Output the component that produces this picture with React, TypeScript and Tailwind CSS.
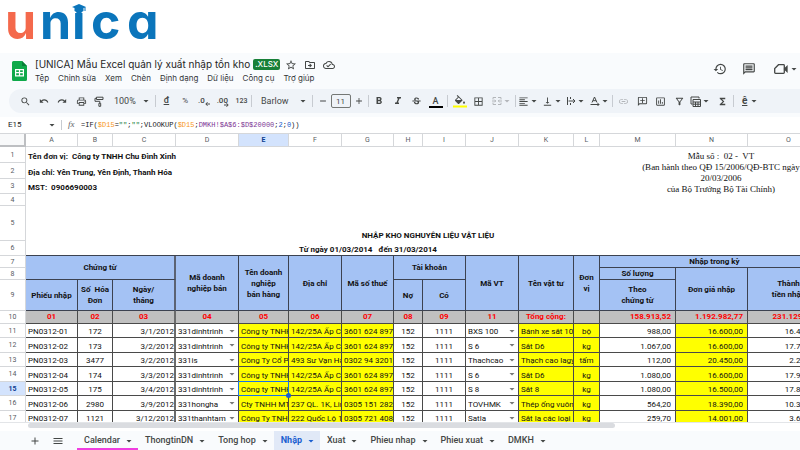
import type { ReactNode } from 'react';
import clsx from 'clsx';
import {
  MdAdd,
  MdArrowDropDown,
  MdBorderAll,
  MdFormatAlignLeft,
  MdFormatBold,
  MdFormatItalic,
  MdFunctions,
  MdHistory,
  MdInsertChartOutlined,
  MdLink,
  MdMenu,
  MdOutlineAddComment,
  MdOutlineCloudDone,
  MdOutlineComment,
  MdOutlineDriveFileMove,
  MdOutlineFilterAlt,
  MdOutlinePrint,
  MdRedo,
  MdRemove,
  MdSearch,
  MdStarBorder,
  MdStrikethroughS,
  MdUndo,
  MdVerticalAlignBottom,
} from 'react-icons/md';

const MENUS = ['Tệp', 'Chỉnh sửa', 'Xem', 'Chèn', 'Định dạng', 'Dữ liệu', 'Công cụ', 'Trợ giúp'];

const COLUMNS = [
  { name: 'A', width: 52 },
  { name: 'B', width: 35 },
  { name: 'C', width: 63 },
  { name: 'D', width: 63 },
  { name: 'E', width: 50 },
  { name: 'F', width: 53 },
  { name: 'G', width: 52 },
  { name: 'H', width: 29 },
  { name: 'I', width: 43 },
  { name: 'J', width: 53 },
  { name: 'K', width: 55 },
  { name: 'L', width: 26 },
  { name: 'M', width: 76 },
  { name: 'N', width: 72 },
  { name: 'O', width: 82 },
];

const ROWS = [
  ['PN0312-01', '172', '3/1/2012', '331dinhtrinh', 'Công ty TNHH', '142/25A Ấp Cá', '3601 624 897', '152', '1111', 'BXS 100', 'Bánh xe sắt 10', 'bộ', '988,00', '16.600,00', '16.400.800'],
  ['PN0312-02', '173', '3/2/2012', '331dinhtrinh', 'Công ty TNHH', '142/25A Ấp Cá', '3601 624 897', '152', '1111', 'S 6', 'Sắt D6', 'kg', '1.067,00', '16.600,00', '17.712.200'],
  ['PN0312-03', '3477', '3/2/2012', '331is', 'Công Ty Cổ P', '493 Sư Vạn Hạ', '0302 94 3201', '152', '1111', 'Thachcao', 'Thạch cao lagy', 'tấm', '112,00', '20.450,00', '2.290.400'],
  ['PN0312-04', '174', '3/3/2012', '331dinhtrinh', 'Công ty TNHH', '142/25A Ấp Cá', '3601 624 897', '152', '1111', 'S 6', 'Sắt D6', 'kg', '1.080,00', '16.600,00', '17.928.000'],
  ['PN0312-05', '175', '3/4/2012', '331dinhtrinh', 'Công ty TNHH', '142/25A Ấp Cá', '3601 624 897', '152', '1111', 'S 8', 'Sắt 8', 'kg', '1.080,00', '16.500,00', '17.820.000'],
  ['PN0312-06', '2980', '3/9/2012', '331hongha', 'Cty TNHH MT', '237 QL. 1K, Lin', '0305 151 282', '152', '1111', 'TOVHMK', 'Thép ống vuôn', 'kg', '564,20', '18.390,00', '10.375.638'],
  ['PN0312-07', '1121', '3/12/2012', '331thanhtam', 'Công Ty TNH', '222 Quốc Lộ 1', '0305 721 408', '152', '1111', 'Satla', 'Sắt la các loại', 'kg', '259,70', '14.001,00', '3.636.060'],
];

const TOTALS = ['01', '02', '03', '04', '05', '06', '07', '08', '09', '11', 'Tổng cộng:', '', '158.913,52', '1.192.982,77', '231.129.512,5'];

const SHEETS = ['Calendar', 'ThongtinDN', 'Tong hop', 'Nhập', 'Xuat', 'Phieu nhap', 'Phieu xuat', 'DMKH'];

const CENTERED = [1, 7, 8, 11];
const RIGHT = [2, 12, 13, 14];
const YELLOW = [4, 5, 6, 10, 11, 13];
const DROPDOWN = [3, 9];

function Logo() {
  return (
    <div
      aria-label="unica"
      className="flex h-[53px] shrink-0 items-start pl-[5px] font-['Inter',sans-serif] text-[50px] font-bold leading-[42px] text-[#0b75bb] [font-feature-settings:'cv11']"
    >
      <span className="w-[35px] text-[#f4694c]">u</span>
      <span className="w-8">n</span>
      <span className="relative w-[19px]">
        i
        <svg viewBox="0 0 14 13" className="absolute left-0 top-0 h-[13px] w-[14px]">
          <path d="M0 0h14v13H0z" fill="#fff" />
          <path d="M7 4 0 7l2.500 1.100V11c1.500 1 2 .8 2 2h5c0-1.200.500-1 2-2V8.100l1-.4V11h1V7.200L14 7z" fill="#0b75bb" />
        </svg>
      </span>
      <span className="w-9">c</span>
      <span>a</span>
    </div>
  );
}

function SheetsIcon() {
  return (
    <svg viewBox="0 0 15 20" className="h-5 w-[15px] shrink-0">
      <path d="M1.500 0H10l5 5v13.500a1.500 1.500 0 0 1-1.500 1.500h-12A1.500 1.500 0 0 1 0 18.500v-17A1.500 1.500 0 0 1 1.500 0z" fill="#0fa94a" />
      <path d="M10 0l5 5h-5z" fill="#087f38" />
      <path d="M3 8h9v7.500H3zM4.200 9.200v1.900h2.700V9.200zm3.900 0v1.900h2.700V9.200zm-3.900 3.100v2h2.700v-2zm3.900 0v2h2.700v-2z" fill="#fff" fillRule="evenodd" />
    </svg>
  );
}

function Caret({ className }: { className?: string }) {
  return <MdArrowDropDown className={clsx('h-3 w-3 shrink-0', className)} />;
}

function Separator() {
  return <div className="h-3 w-px shrink-0 bg-[#c7cbd1]" />;
}

interface ToolProps {
  label: string;
  children: ReactNode;
  menu?: boolean;
  muted?: boolean;
}

function Tool({ label, children, menu, muted }: ToolProps) {
  return (
    <button
      type="button"
      aria-label={label}
      className={clsx('flex items-center justify-center', muted && 'text-[#b3b6ba]')}
    >
      {children}
      {menu && <Caret className="-mx-px" />}
    </button>
  );
}

function Header() {
  return (
    <header className="flex h-9 shrink-0 items-start bg-[#f9fbfd] pl-3">
      <div className="pt-2">
        <SheetsIcon />
      </div>
      <div className="flex flex-col pl-2 pt-1 font-['Inter',sans-serif]">
        <div className="flex items-center whitespace-nowrap leading-[15px] text-[#1f1f1f]">
          <h1 className="text-[10px]">[UNICA] Mẫu Excel quản lý xuất nhập tồn kho</h1>
          <span className="ml-[3px] rounded-[2px] bg-[#188038] px-[2px] text-[8px] font-medium leading-[11px] text-white">.XLSX</span>
          <div className="ml-[5px] flex gap-[7px] text-[#444746]">
            <button type="button" aria-label="Gắn dấu sao"><MdStarBorder className="h-3 w-3" /></button>
            <button type="button" aria-label="Di chuyển"><MdOutlineDriveFileMove className="h-3 w-3" /></button>
            <button type="button" aria-label="Trạng thái"><MdOutlineCloudDone className="h-3 w-3" /></button>
          </div>
        </div>
        <nav className="flex gap-[9px] whitespace-nowrap text-[8px] leading-[12px] text-[#333639]">
          {MENUS.map((menu) => (
            <button key={menu} type="button">{menu}</button>
          ))}
        </nav>
      </div>
      <div className="ml-auto flex items-center gap-[15px] pt-[9px] text-[#444746]">
        <button type="button" aria-label="Lịch sử"><MdHistory className="h-[14px] w-[14px]" /></button>
        <button type="button" aria-label="Nhận xét"><MdOutlineComment className="h-[14px] w-[14px] -scale-x-100" /></button>
        <button type="button" aria-label="Cuộc gọi" className="ml-[3px] flex items-center">
          <svg viewBox="0 0 14 14" className="h-[14px] w-[14px]" fill="none" stroke="currentColor" strokeWidth="1.300">
            <path d="M4.500 2.700h5a.8.800 0 0 1 .8.800v7a.8.800 0 0 1-.8.800h-8a.8.800 0 0 1-.8-.8v-4z" />
            <path d="M10.500 7 13 4.500v5z" fill="currentColor" />
          </svg>
          <Caret />
        </button>
      </div>
    </header>
  );
}

function Toolbar() {
  return (
    <div className="shrink-0 bg-[#f9fbfd] pb-1 pl-[9px]">
      <div className="flex h-6 items-center overflow-hidden rounded-l-full bg-[#eff3f8] pl-[7px] text-[8px] text-[#444746] [&_svg]:shrink-0">
        <div className="grid w-[93px] shrink-0 grid-cols-5">
          <Tool label="Tìm"><MdSearch className="h-[11px] w-[11px]" /></Tool>
          <Tool label="Hoàn tác"><MdUndo className="h-[10px] w-[10px]" /></Tool>
          <Tool label="Làm lại"><MdRedo className="h-[10px] w-[10px]" /></Tool>
          <Tool label="In"><MdOutlinePrint className="h-[11px] w-[11px]" /></Tool>
          <Tool label="Sao chép định dạng">
            <svg viewBox="0 0 11 11" className="h-[11px] w-[11px]" fill="none" stroke="currentColor">
              <path d="M2.500 1.200h6.500v2.300H2.500zM2.500 2.300H1v3h4.800v2M4.900 7.300h1.800v3H4.900z" />
            </svg>
          </Tool>
        </div>
        <div className="relative flex w-[46px] shrink-0 items-center">
          <select aria-label="Thu phóng" className="w-full appearance-none bg-transparent pl-[5px] text-[9px] leading-3">
            <option>100%</option>
          </select>
          <Caret className="pointer-events-none absolute right-[3px]" />
        </div>
        <Separator />
        <div className="ml-px grid w-[94px] shrink-0 grid-cols-5">
          <Tool label="Tiền tệ"><span className="text-[9px] font-medium underline">đ</span></Tool>
          <Tool label="Phần trăm">%</Tool>
          <Tool label="Giảm số thập phân">
            <span className="font-medium leading-[10px]">.0</span>
            <svg viewBox="0 0 5 6" className="mt-[6px] h-[6px] w-[5px]" fill="none" stroke="currentColor"><path d="M5 3H1M2.500 1.200.800 3l1.700 1.800" /></svg>
          </Tool>
          <Tool label="Tăng số thập phân">
            <span className="font-medium leading-[10px]">.00</span>
            <svg viewBox="0 0 5 6" className="-ml-1 mt-[8px] h-[6px] w-[5px]" fill="none" stroke="currentColor"><path d="M0 3h4M2.500 1.200 4.200 3 2.500 4.800" /></svg>
          </Tool>
          <Tool label="Định dạng số"><span className="text-[7px] font-medium">123</span></Tool>
        </div>
        <Separator />
        <div className="relative flex w-[60px] shrink-0 items-center">
          <select aria-label="Phông chữ" className="w-full appearance-none bg-transparent pl-[9px] text-[9px] leading-3">
            <option>Barlow</option>
          </select>
          <Caret className="pointer-events-none absolute right-[3px]" />
        </div>
        <Separator />
        <div className="flex w-[55px] shrink-0 items-center justify-center gap-[3px]">
          <button type="button" aria-label="Giảm cỡ chữ"><MdRemove className="h-[10px] w-[10px]" /></button>
          <input aria-label="Cỡ chữ" defaultValue="11" className="h-[14px] w-5 rounded-[2px] border border-[#747775] bg-transparent text-center text-[8px]" />
          <button type="button" aria-label="Tăng cỡ chữ"><MdAdd className="h-[10px] w-[10px]" /></button>
        </div>
        <Separator />
        <div className="mr-[2px] grid w-[76px] shrink-0 grid-cols-4">
          <Tool label="Đậm"><MdFormatBold className="h-3 w-3" /></Tool>
          <Tool label="Nghiêng"><MdFormatItalic className="h-3 w-3" /></Tool>
          <Tool label="Gạch ngang"><MdStrikethroughS className="h-[11px] w-[11px]" /></Tool>
          <Tool label="Màu chữ">
            <span className="w-[14px] border-b-2 border-black pt-px text-[9px] font-medium leading-[10px]">A</span>
          </Tool>
        </div>
        <Separator />
        <div className="ml-[2px] flex shrink-0 items-center">
          <div className="grid w-[38px] grid-cols-2">
            <Tool label="Màu nền">
              <svg viewBox="0 0 14 13" className="h-[13px] w-[14px]" fill="currentColor">
                <path d="M4.500 0 9.700 5.200 6.200 8.700a1 1 0 0 1-1.300 0L2.200 6a1 1 0 0 1 0-1.300L5 1.900 3.700.700zM5.700 2.600 3.200 5.100h5zM11 6s1 1.200 1 1.800a1 1 0 0 1-2 0C10 7.200 11 6 11 6z" />
                <path d="M0 10.500h14v2H0z" fill="#ffff00" />
              </svg>
            </Tool>
            <Tool label="Đường viền"><MdBorderAll className="h-[11px] w-[11px]" /></Tool>
          </div>
          <div className="flex w-[27px] justify-center">
            <Tool label="Hợp nhất ô" menu muted>
              <svg viewBox="0 0 10 10" className="h-[10px] w-[10px]" fill="none" stroke="currentColor">
                <path d="M4 1.500H1V3.500M6 1.500h3v2M4 8.500H1V6.500M6 8.500h3v-2M0 5h3.500M2.500 3.700 3.800 5 2.500 6.300M10 5H6.500M7.500 3.700 6.200 5l1.300 1.300" />
              </svg>
            </Tool>
          </div>
        </div>
        <Separator />
        <div className="grid w-[96px] shrink-0 grid-cols-4">
          <Tool label="Căn ngang" menu><MdFormatAlignLeft className="h-[11px] w-[11px]" /></Tool>
          <Tool label="Căn dọc" menu><MdVerticalAlignBottom className="h-[11px] w-[11px]" /></Tool>
          <Tool label="Xuống dòng" menu>
            <svg viewBox="0 0 10 10" className="h-[10px] w-[10px]" fill="none" stroke="currentColor">
              <path d="M1.500 1v8M4.500 1v2M4.500 7v2M2.500 5h6.500M7 3l2 2-2 2" />
            </svg>
          </Tool>
          <Tool label="Xoay chữ" menu>
            <svg viewBox="0 0 10 10" className="h-[10px] w-[10px]" fill="none" stroke="currentColor">
              <path d="M2 6.500 4.500 1 7 6.500M3 4.700h3M.500 8.500H9M7.500 7 9 8.500 7.500 10" />
            </svg>
          </Tool>
        </div>
        <Separator />
        <div className="flex shrink-0 items-center pl-px">
          <div className="grid w-[75px] grid-cols-4">
            <Tool label="Liên kết" muted><MdLink className="h-[11px] w-[11px]" /></Tool>
            <Tool label="Nhận xét"><MdOutlineAddComment className="h-[11px] w-[11px] -scale-x-100" /></Tool>
            <Tool label="Biểu đồ"><MdInsertChartOutlined className="h-[11px] w-[11px]" /></Tool>
            <Tool label="Bộ lọc"><MdOutlineFilterAlt className="h-[11px] w-[11px]" /></Tool>
          </div>
          <div className="flex w-[22px] justify-center">
            <Tool label="Chế độ xem" menu>
              <svg viewBox="0 0 11 11" className="h-[11px] w-[11px]" fill="none" stroke="currentColor">
                <path d="M9 2.500V1H1v7h1.500M3 3.500h7.500v7H3zM3 6h7.500M3 8.200h7.500M5.500 6v4.500M8 6v4.500" />
              </svg>
            </Tool>
          </div>
          <div className="flex w-[22px] justify-center">
            <Tool label="Hàm"><MdFunctions className="h-[11px] w-[11px]" /></Tool>
          </div>
        </div>
        <Separator />
        <div className="ml-2">
          <Tool label="Công cụ nhập" menu>
            <span className="mr-[2px] text-[10px] font-bold leading-[10px] underline">ê</span>
          </Tool>
        </div>
      </div>
    </div>
  );
}

function FormulaBar() {
  return (
    <div className="flex h-[17px] shrink-0 items-center border-b border-[#d5d7da] bg-white text-[8px] text-[#202124]">
      <input aria-label="Hộp tên" defaultValue="E15" className="w-[46px] pl-2" />
      <Caret className="text-[#444746]" />
      <div className="ml-[3px] h-[10px] w-px bg-[#c7cbd1]" />
      <i className="w-[19px] pl-[6px] font-['Liberation_Serif',serif] text-[9px] text-[#5f6368]">fx</i>
      <code className="whitespace-nowrap font-['Liberation_Mono',monospace] text-[7px]">
        =IF(<span className="text-[#f7981d]">$D15</span>=<span className="text-[#188038]">""</span>;
        <span className="text-[#188038]">""</span>;VLOOKUP(<span className="text-[#f7981d]">$D15</span>;
        <span className="text-[#7e3794]">DMKH!$A$6:$D$20000</span>;<span className="text-[#1155cc]">2</span>;
        <span className="text-[#1155cc]">0</span>))
      </code>
    </div>
  );
}

function RowHead({ row, active }: { row: number; active?: boolean }) {
  return (
    <th
      scope="row"
      className={clsx(
        'border-b border-r border-[#d5d7da] text-[7px] leading-[10px]',
        active ? 'bg-[#d3e3fd] font-bold text-[#0b3d91]' : 'bg-white font-normal text-[#575b5f]',
      )}
    >
      {row}
    </th>
  );
}

interface HeadCellProps {
  children?: ReactNode;
  colSpan?: number;
  rowSpan?: number;
  frozen?: boolean;
}

function HeadCell({ children, colSpan, rowSpan, frozen }: HeadCellProps) {
  return (
    <th
      colSpan={colSpan}
      rowSpan={rowSpan}
      className={clsx(
        'border-b border-[#3c4250] bg-[#a4c2f4] text-center font-bold leading-[11px]',
        frozen ? 'border-r-2 border-r-[#5b6273]' : 'border-r',
      )}
    >
      {children}
    </th>
  );
}

function DataRow({ cells, row }: { cells: string[]; row: number }) {
  const active = row === 15;
  return (
    <tr className={row % 2 ? 'h-[14px]' : 'h-[15px]'}>
      <RowHead row={row} active={active} />
      {cells.map((cell, i) => (
        <td
          key={i}
          className={clsx(
            'relative border-b border-[#4a4a4a]',
            i === 2 ? 'border-r-2 border-r-[#6b6b6b]' : 'border-r',
            YELLOW.includes(i) ? 'bg-[#ffff00]' : 'bg-white',
            CENTERED.includes(i) && 'text-center',
            RIGHT.includes(i) && (i < 12 ? 'text-right' : 'pr-1 text-right'),
            !CENTERED.includes(i) && !RIGHT.includes(i) && 'pl-[2px]',
          )}
        >
          {DROPDOWN.includes(i) ? (
            <div className="relative flex items-center">
              <select aria-label={`${COLUMNS[i].name}${row}`} className="h-[13px] w-full appearance-none bg-transparent pt-[2px] leading-[11px]">
                <option>{cell}</option>
              </select>
              <Caret className="pointer-events-none absolute right-0 text-[#777]" />
            </div>
          ) : (
            <div className="h-[13px] overflow-hidden leading-[15px]">{cell}</div>
          )}
          {active && i === 4 && (
            <div className="absolute -left-px -top-px bottom-[-1px] right-[-1px] z-10 border border-[#1a73e8]">
              <div className="absolute -bottom-[3px] -right-[3px] h-[5px] w-[5px] rounded-full bg-[#1a5fd0]" />
            </div>
          )}
        </td>
      ))}
    </tr>
  );
}

function Grid() {
  return (
    <div className="min-h-0 flex-1 overflow-hidden">
      <table className="w-[830px] table-fixed border-separate border-spacing-0 whitespace-nowrap text-[8px] text-[#111]">
        <colgroup>
          <col className="w-[26px]" />
          {COLUMNS.map((col) => (
            <col key={col.name} style={{ width: col.width }} />
          ))}
        </colgroup>
        <thead>
          <tr className="h-[13px] text-[7px] leading-[10px] text-[#575b5f]">
            <td className="border-b-2 border-r-2 border-[#bdbfc2] bg-[#f8f9fa]" />
            {COLUMNS.map((col) => (
              <th
                key={col.name}
                scope="col"
                className={clsx(
                  'border-b border-r border-[#d5d7da]',
                  col.name === 'E' ? 'bg-[#d3e3fd] font-bold text-[#0b3d91]' : 'font-normal',
                )}
              >
                {col.name}
              </th>
            ))}
          </tr>
        </thead>
        <tbody>
          <tr className="h-4">
            <RowHead row={1} />
            <td colSpan={12} className="pl-[2px] pt-1 font-bold leading-3">Tên đơn vị:&nbsp; Công ty TNHH Chu Đình Xinh</td>
            <td colSpan={3} rowSpan={4} className="pl-3 pt-1 text-center align-top font-['Liberation_Serif',serif] text-[9px] leading-[11px]">
              Mẫu số :&nbsp; 02 -&nbsp; VT
              <br />
              (Ban hành theo QĐ 15/2006/QĐ-BTC ngày
              <br />
              20/03/2006
              <br />
              của Bộ Trưởng Bộ Tài Chính)
            </td>
          </tr>
          <tr className="h-4">
            <RowHead row={2} />
            <td colSpan={12} className="pl-[2px] pt-1 font-bold leading-3">Địa chỉ: Yên Trung, Yên Định, Thanh Hóa</td>
          </tr>
          <tr className="h-[15px]">
            <RowHead row={3} />
            <td colSpan={12} className="pl-[2px] pt-[3px] font-bold leading-3">MST:&nbsp; 0906690003</td>
          </tr>
          <tr className="h-3">
            <RowHead row={4} />
            <td colSpan={12} />
          </tr>
          <tr className="h-[35px]">
            <RowHead row={5} />
            <td colSpan={15} className="text-center align-bottom font-bold leading-[11px]">NHẬP KHO NGHUYÊN LIỆU VẬT LIỆU</td>
          </tr>
          <tr className="h-[15px]">
            <RowHead row={6} />
            <td colSpan={5} className="border-b border-[#3c4250]" />
            <td colSpan={10} className="border-b border-[#3c4250] pl-[10px] pt-1 font-bold leading-[10px]">
              Từ ngày 01/03/2014&nbsp;&nbsp; đến 31/03/2014
            </td>
          </tr>
          <tr className="h-3">
            <RowHead row={7} />
            <HeadCell colSpan={3} rowSpan={2} frozen>Chứng từ</HeadCell>
            <HeadCell rowSpan={3}>Mã doanh<br />nghiệp bán</HeadCell>
            <HeadCell rowSpan={3}>Tên doanh<br />nghiệp<br />bán hàng</HeadCell>
            <HeadCell rowSpan={3}>Địa chỉ</HeadCell>
            <HeadCell rowSpan={3}>Mã số thuế</HeadCell>
            <HeadCell colSpan={2} rowSpan={2}>Tài khoản</HeadCell>
            <HeadCell rowSpan={3}>Mã VT</HeadCell>
            <HeadCell rowSpan={3}>Tên vật tư</HeadCell>
            <HeadCell rowSpan={3}>Đơn<br />vị</HeadCell>
            <HeadCell colSpan={3}>Nhập trong kỳ</HeadCell>
          </tr>
          <tr className="h-3">
            <RowHead row={8} />
            <HeadCell>Số lượng</HeadCell>
            <HeadCell rowSpan={2}>Đơn giá nhập</HeadCell>
            <HeadCell rowSpan={2}>Thành<br />tiền nhập</HeadCell>
          </tr>
          <tr className="h-[31px]">
            <RowHead row={9} />
            <HeadCell>Phiếu nhập</HeadCell>
            <HeadCell>Số&nbsp; Hóa<br />Đơn</HeadCell>
            <HeadCell frozen>Ngày/<br />tháng</HeadCell>
            <HeadCell>Nợ</HeadCell>
            <HeadCell>Có</HeadCell>
            <HeadCell>Theo<br />chứng từ</HeadCell>
          </tr>
          <tr className="h-[13px] leading-3">
            <RowHead row={10} />
            {TOTALS.map((cell, i) => (
              <td
                key={i}
                className={clsx(
                  'border-b border-[#4a4a4a] bg-[#c0c0c0] font-bold text-[#ff0000]',
                  i === 2 ? 'border-r-2 border-r-[#6b6b6b]' : 'border-r',
                  i < 12 ? 'text-center' : 'pr-1 text-right',
                )}
              >
                {cell}
              </td>
            ))}
          </tr>
          {ROWS.map((cells, i) => (
            <DataRow key={i} cells={cells} row={11 + i} />
          ))}
        </tbody>
      </table>
    </div>
  );
}

function SheetTabs() {
  return (
    <footer className="flex h-[19px] shrink-0 items-stretch bg-[#f9fbfd] pl-[29px] text-[9px] font-medium text-[#444746]">
      <button type="button" aria-label="Thêm trang tính"><MdAdd className="h-3 w-3" /></button>
      <button type="button" aria-label="Tất cả trang tính" className="ml-[11px] mr-[13px]"><MdMenu className="h-3 w-3" /></button>
      {SHEETS.map((name) => (
        <button
          key={name}
          type="button"
          className={clsx(
            'flex items-center gap-[3px] border-b-2 pl-[7px] pr-[3px] pt-[2px]',
            name === 'Calendar' ? 'border-[#f03ee0]' : 'border-transparent',
            name === 'Nhập' && 'bg-[#e1e9f7] font-bold text-[#1a5fd0]',
          )}
        >
          {name}
          <Caret />
        </button>
      ))}
    </footer>
  );
}

export default function App() {
  return (
    <div className="flex h-screen flex-col overflow-hidden bg-white font-['Roboto',sans-serif]">
      <Logo />
      <Header />
      <Toolbar />
      <FormulaBar />
      <Grid />
      <div className="flex h-[9px] shrink-0 items-start border-t border-[#e3e5e8] bg-white pl-7">
        <div className="h-[5px] w-[76%] rounded-full bg-[#dadce0]" />
      </div>
      <SheetTabs />
    </div>
  );
}
